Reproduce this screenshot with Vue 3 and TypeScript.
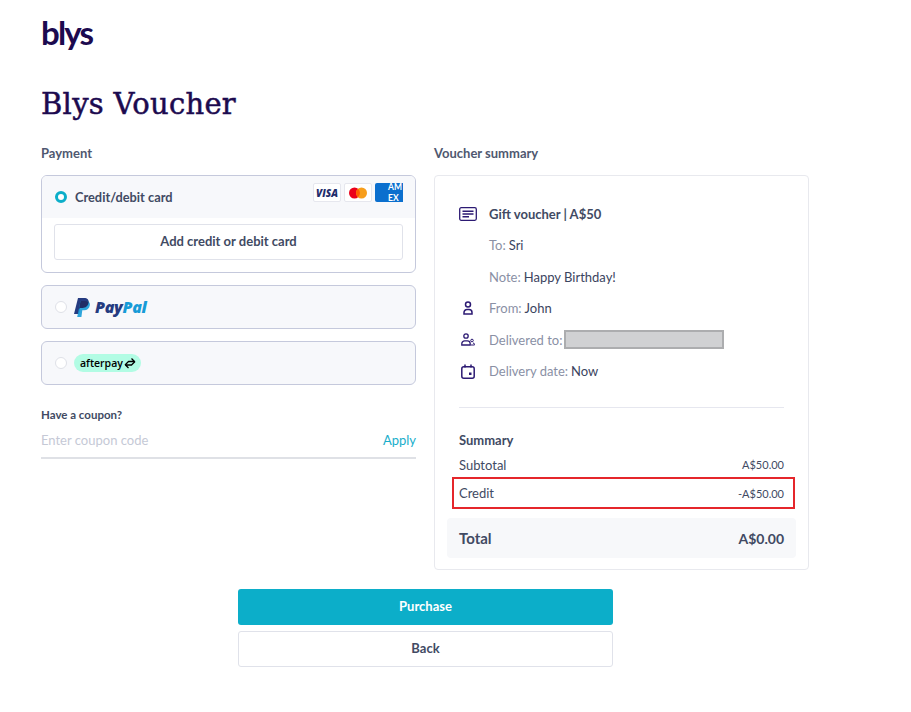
<script setup lang="ts">
const details = [
  { label: 'To:', value: 'Sri', icon: '' },
  { label: 'Note:', value: 'Happy Birthday!', icon: '' },
  { label: 'From:', value: 'John', icon: 'user' },
  { label: 'Delivered to:', value: '', icon: 'users', redacted: true },
  { label: 'Delivery date:', value: 'Now', icon: 'calendar' },
];
</script>

<template>
  <div class="page">
    <div class="logo">blys</div>
    <h1 class="title">Blys Voucher</h1>

    <div class="columns">
      <section class="col">
        <h2 class="section-title">Payment</h2>

        <div class="pay-box">
          <div class="pay-head">
            <span class="radio radio-on"></span>
            <span class="pay-label">Credit/debit card</span>
            <div class="cards">
              <span class="card card-visa">VISA</span>
              <span class="card card-mc">
                <svg width="20" height="12" viewBox="0 0 20 12">
                  <circle cx="6.500" cy="6" r="5.500" fill="#eb001b" />
                  <circle cx="13.500" cy="6" r="5.500" fill="#f79e1b" />
                  <path d="M10 1.800a5.500 5.500 0 0 1 0 8.400a5.500 5.500 0 0 1 0-8.400z" fill="#ff5f00" />
                </svg>
              </span>
              <span class="card card-amex"><span>AM<br />EX</span></span>
            </div>
          </div>
          <div class="pay-body">
            <button class="btn btn-outline">Add credit or debit card</button>
          </div>
        </div>

        <div class="pay-option">
          <span class="radio"></span>
          <svg class="pp-mark" width="16" height="19" viewBox="0 0 16 19">
            <path d="M4 0h6c3.500 0 5 2 4.500 4.800C14 8 11.500 10 8.500 10H6l-1 6H0z" fill="#253b80" />
            <path d="M6.500 3h5.500c3 0 4.300 1.800 3.800 4.400-.5 3-2.800 4.800-5.600 4.800H8.300L7.400 19H3.200z" fill="#179bd7" opacity=".9" />
            <path d="M6 10h2.500c3 0 5.500-2 6-5.200.1-.4.100-.8.100-1.200C14 3.200 13 3 12 3H6.500L5 11z" fill="#222d65" />
          </svg>
          <span class="pp-word"><span class="pp-dark">Pay</span><span class="pp-light">Pal</span></span>
        </div>

        <div class="pay-option">
          <span class="radio"></span>
          <span class="afterpay">
            afterpay
            <svg width="12" height="12" viewBox="0 0 12 12" fill="none" stroke="#000" stroke-width="1.300" stroke-linejoin="round">
              <path d="M1 8l3.500-3.500h6L7.500 1.500" />
              <path d="M11 4.500L7.500 8h-6l3 3" />
            </svg>
          </span>
        </div>

        <div class="coupon">
          <label class="coupon-label">Have a coupon?</label>
          <div class="coupon-row">
            <span class="coupon-placeholder">Enter coupon code</span>
            <span class="coupon-apply">Apply</span>
          </div>
        </div>
      </section>

      <section class="col">
        <h2 class="section-title">Voucher summary</h2>

        <div class="summary-card">
          <div class="detail-row detail-head">
            <span class="detail-icon">
              <svg width="18" height="14" viewBox="0 0 18 14" fill="none" stroke="#2c1a73" stroke-width="1.300">
                <rect x=".7" y=".7" width="16.600" height="12.600" rx="1.500" />
                <path d="M3.500 4.200h11M3.500 7h11M3.500 9.800h6.500" stroke-width="1.400" />
              </svg>
            </span>
            <span class="detail-strong">Gift voucher | A$50</span>
          </div>

          <div v-for="row in details" :key="row.label" class="detail-row">
            <span class="detail-icon">
              <svg v-if="row.icon === 'user'" width="10" height="14" viewBox="0 0 10 14" fill="none" stroke="#2c1a73" stroke-width="1.500">
                <circle cx="5" cy="3.500" r="2.500" />
                <path d="M1 13v-1.500a3 3 0 0 1 3-3h2a3 3 0 0 1 3 3V13z" />
              </svg>
              <svg v-else-if="row.icon === 'users'" width="14" height="13" viewBox="0 0 14 13" fill="none" stroke="#2c1a73" stroke-width="1.300">
                <circle cx="5" cy="3" r="2.200" />
                <path d="M.8 12v-1.300a2.800 2.800 0 0 1 2.800-2.800h2.800a2.800 2.800 0 0 1 2.800 2.800V12z" />
                <circle cx="11" cy="7.500" r="1.300" stroke-width="1" />
                <path d="M10 12h3.500v-.5a1.500 1.500 0 0 0-1.500-1.500" stroke-width="1" />
              </svg>
              <svg v-else-if="row.icon === 'calendar'" width="14" height="15" viewBox="0 0 14 15" fill="none" stroke="#2c1a73" stroke-width="1.500">
                <rect x=".8" y="2.800" width="12.400" height="11.400" rx="2" />
                <path d="M4 .5v3M10 .5v3" />
                <rect x="8" y="8.500" width="2.500" height="2.500" fill="#2c1a73" stroke="none" />
              </svg>
            </span>
            <span class="detail-label">{{ row.label }}</span>
            <span v-if="row.redacted" class="redacted"></span>
            <span v-else class="detail-value">{{ row.value }}</span>
          </div>

          <hr class="divider" />

          <div class="summary-title">Summary</div>
          <div class="price-row price-first">
            <span>Subtotal</span><span class="price">A$50.00</span>
          </div>
          <div class="price-row price-credit">
            <span>Credit</span><span class="price">-A$50.00</span>
          </div>
          <div class="total">
            <span>Total</span><span class="total-value">A$0.00</span>
          </div>
        </div>
      </section>
    </div>

    <div class="actions">
      <button class="btn btn-primary">Purchase</button>
      <button class="btn btn-outline">Back</button>
    </div>
  </div>
</template>

<style scoped>
.page {
  width: 911px;
  height: 712px;
  box-sizing: border-box;
  padding: 13px 0 0 41px;
  font-family: Lato, "Liberation Sans", sans-serif;
  color: #414a63;
  background: #fff;
  overflow: hidden;
}

.logo {
  height: 40px;
  font-family: Lato, sans-serif;
  font-size: 33px;
  font-weight: 700;
  line-height: 38px;
  letter-spacing: -1.800px;
  color: #1c0a4f;
}

.title {
  margin: 30px 0 0;
  height: 42px;
  font-family: "DejaVu Serif", serif;
  font-size: 29px;
  font-weight: 400;
  line-height: 42px;
  letter-spacing: 0.300px;
  color: #1c0a4f;
  -webkit-text-stroke: 0.500px #1c0a4f;
}

.columns {
  display: flex;
  gap: 18px;
  margin-top: 20px;
}

.col {
  width: 375px;
}

.section-title {
  margin: 0 0 14px;
  font-size: 13px;
  font-weight: 700;
  line-height: 16px;
  color: #4f5870;
}

.pay-box {
  height: 98px;
  box-sizing: border-box;
  border: 1px solid #c5c9dc;
  border-radius: 6px;
  overflow: hidden;
}

.pay-head {
  display: flex;
  align-items: center;
  height: 42px;
  padding: 0 12px 0 13px;
  background: #f7f8fb;
}

.radio {
  flex: none;
  width: 12px;
  height: 12px;
  box-sizing: border-box;
  border: 1px solid #dfe1e8;
  border-radius: 50%;
  background: #fff;
}

.radio-on {
  border: 3px solid #0caec9;
}

.pay-label {
  margin-left: 8px;
  font-size: 12.800px;
  font-weight: 700;
}

.cards {
  display: flex;
  gap: 3px;
  margin-left: auto;
  align-self: flex-start;
  margin-top: 7px;
}

.card {
  display: flex;
  align-items: center;
  justify-content: center;
  width: 28px;
  height: 19px;
  box-sizing: border-box;
  border: 1px solid #e6e7ee;
  border-radius: 2px;
  background: #fff;
}

.card-visa {
  font-family: "Open Sans", sans-serif;
  font-size: 10px;
  font-weight: 800;
  font-style: italic;
  color: #1f2d6b;
}

.card-amex {
  border: 0;
  border-radius: 2px 0 0 2px;
  background: #0b6fce;
  overflow: hidden;
  justify-content: flex-start;
}

.card-amex span {
  margin-left: 13px;
  font-size: 8.500px;
  font-weight: 700;
  line-height: 10.200px;
  white-space: nowrap;
  color: #fff;
}

.pay-body {
  padding: 6px 12px 0;
}

.btn {
  display: block;
  width: 100%;
  height: 36px;
  box-sizing: border-box;
  padding: 0 0 2px;
  border-radius: 3px;
  font-family: inherit;
  font-size: 13px;
  font-weight: 700;
}

.btn-outline {
  border: 1px solid #e0e2ea;
  background: #fff;
  color: #414a63;
}

.btn-primary {
  border: 0;
  background: #0caec9;
  color: #fff;
}

.pay-option {
  display: flex;
  align-items: center;
  height: 44px;
  box-sizing: border-box;
  margin-top: 12px;
  padding: 0 13px;
  border: 1px solid #c5c9dc;
  border-radius: 6px;
  background: #f7f8fb;
}

.pp-mark {
  margin-left: 7px;
}

.pp-word {
  margin-left: 5px;
  font-family: "Open Sans", sans-serif;
  font-size: 16px;
  font-weight: 800;
  font-style: italic;
  letter-spacing: -0.300px;
}

.pp-dark {
  color: #253b80;
}

.pp-light {
  color: #179bd7;
}

.afterpay {
  display: flex;
  align-items: center;
  gap: 1px;
  height: 18px;
  margin-left: 7px;
  padding: 0 5px 0 6px;
  border-radius: 9px;
  background: #b2fce4;
  font-family: "Open Sans", sans-serif;
  font-size: 10.500px;
  font-weight: 600;
  color: #000;
}

.coupon {
  margin-top: 23px;
}

.coupon-label {
  display: block;
  font-size: 11.500px;
  font-weight: 700;
  line-height: 14px;
  color: #414a63;
}

.coupon-row {
  display: flex;
  justify-content: space-between;
  align-items: center;
  height: 24px;
  margin-top: 6px;
  padding-bottom: 5px;
  border-bottom: 2px solid #dfe1e6;
}

.coupon-placeholder {
  font-size: 13px;
  color: #c5c9d6;
}

.coupon-apply {
  font-size: 13px;
  color: #19aecb;
}

.summary-card {
  height: 395px;
  box-sizing: border-box;
  padding: 22px 12px 0;
  border: 1px solid #e8e9ee;
  border-radius: 4px;
}

.detail-row {
  display: flex;
  align-items: center;
  height: 31.500px;
  padding-left: 12px;
  font-size: 13px;
}

.detail-icon {
  display: flex;
  justify-content: center;
  flex: none;
  width: 18px;
  margin-right: 12px;
}

.detail-strong {
  font-weight: 700;
}

.detail-label {
  color: #8a90a5;
}

.detail-value {
  margin-left: 3px;
  color: #3b4460;
}

.redacted {
  width: 160px;
  height: 19px;
  box-sizing: border-box;
  margin-left: 2px;
  border: 2px solid #acadaf;
  background: #d0d1d3;
}

.divider {
  height: 1px;
  margin: 20px 12px 0;
  border: 0;
  background: #e6e7ef;
}

.summary-title {
  margin: 24px 12px 0;
  font-size: 13px;
  font-weight: 700;
  line-height: 16px;
}

.price-row {
  display: flex;
  justify-content: space-between;
  align-items: center;
  padding: 0 12px;
  font-size: 13px;
}

.price-first {
  height: 25px;
  margin-top: 4px;
}

.price-credit {
  height: 32px;
  margin: 0 1px 0 5px;
  padding: 0 9px 0 5px;
  box-sizing: border-box;
  border: 2px solid #e5262b;
}

.price {
  font-size: 11px;
}

.total {
  display: flex;
  justify-content: space-between;
  align-items: center;
  height: 40px;
  margin-top: 9px;
  padding: 0 12px;
  border-radius: 4px;
  background: #f7f8fa;
  font-size: 15px;
  font-weight: 700;
}

.total-value {
  font-size: 14px;
}

.actions {
  display: flex;
  flex-direction: column;
  gap: 6px;
  width: 375px;
  margin: 19px 0 0 197px;
}
</style>
